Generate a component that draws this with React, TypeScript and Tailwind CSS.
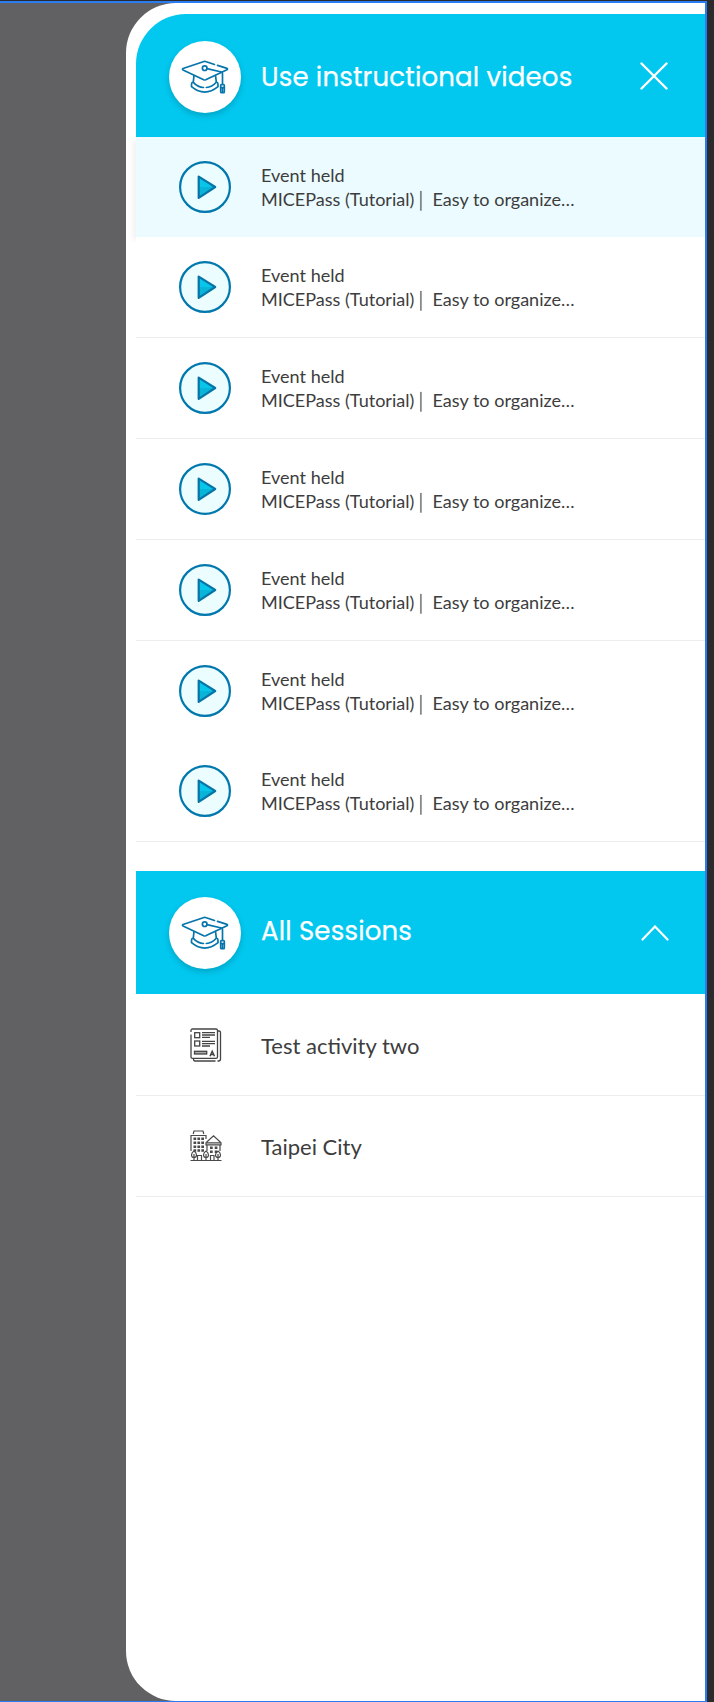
import React from "react";

function CapBadge() {
  return (
    <div className="flex h-[72px] w-[72px] shrink-0 items-center justify-center rounded-full bg-white shadow-[0_3px_6px_rgba(0,0,0,0.18)]">
      <svg width="72" height="72" viewBox="0 0 72 72" fill="none" stroke="#0675ab" strokeWidth="1.7" strokeLinecap="round" strokeLinejoin="round">
        <path d="M45.500 23.500 L36.500 20.500 Q35.700 20.300 35 20.500 L14 27.500 Q13 28.200 14 28.900 L34.700 38.800 Q35.700 39.200 36.700 38.800 L58 28.700 Q59 28 58 27.400 L48.500 24.400" />
        <circle cx="35.700" cy="27.200" r="2.300" />
        <path d="M38 27.600 L52.500 31 Q53.500 31.300 53.500 32.500 V43.500" />
        <path d="M25 34.500 L24.300 40.800 Q22.300 41.800 22.500 43.500 V45.700 Q35.700 56.500 49 45.700 V43.500 Q49.200 41.800 47.300 40.800 L46.500 34.500" />
        <path d="M24.300 41.300 Q29 46.300 34.500 46.500 M37.300 46.500 Q43 46.200 47.300 41.300" />
        <rect x="51.700" y="43.500" width="3.600" height="8.200" rx="0.800" />
        <path d="M51.700 46.700 H55.300 M53.500 47 V51" />
      </svg>
    </div>
  );
}

function PlayIcon() {
  return (
    <svg className="shrink-0" width="52" height="52" viewBox="0 0 52 52">
      <circle cx="26" cy="26" r="24.900" fill="#ebfdff" stroke="#0078ad" strokeWidth="2.200" />
      <path d="M19.700 15.600 L36.200 26 L19.700 36.800 Z" fill="#08b5d8" />
      <path d="M19.700 15.600 L36.200 26 H19.700 Z" fill="#08c6ea" />
      <path d="M19.700 15.600 L36.200 26 L19.700 36.800 Z" fill="none" stroke="#0675a6" strokeWidth="2.200" strokeLinejoin="round" />
    </svg>
  );
}

function DocumentIcon() {
  return (
    <svg width="32" height="34" viewBox="0 0 32 34" fill="none" stroke="#444" strokeWidth="1.300">
      <path d="M1 4 V2.500 Q1 1 2.500 1 H26 Q27.500 1 27.500 2.500 V29 Q27.500 30.300 26 30.300 H2.500 Q1 30.300 1 29 V6.500" />
      <path d="M27.500 3 H29 Q30.500 3 30.500 4.500 V31 Q30.500 33 28.500 33 H27.500 M25.500 33 H5 Q3.500 33 3.500 31 V30.500" />
      <rect x="4.700" y="4.700" width="5" height="5" />
      <rect x="4.700" y="13" width="5" height="5" />
      <path d="M12 4.700 H25 M12 7 H25 M12 9.400 H20 M12 13.300 H25 M12 15.600 H25 M12 18 H20" />
      <rect x="4.500" y="23.300" width="12.200" height="2.700" fill="#aaa" />
      <path d="M20 28.200 L22.200 23.300 L24.500 28.200 M20.700 26.500 H23.800" strokeWidth="1.500" />
    </svg>
  );
}

function CityIcon() {
  return (
    <svg width="32" height="32" viewBox="0 0 32 32" fill="none" stroke="#4a4a4a" strokeWidth="1.200">
      <path d="M3.200 4 L4 1 H13 L13.800 4 M1 21 V5.500 H16 V9 M1 5.500 H16 M.5 30.500 H31.500" />
      <path d="M3.500 8.700 H14 M3.500 12.700 H14 M3.500 16.700 H14 M3.500 20.500 H14" strokeWidth="2.600" strokeDasharray="2.700 1.200" />
      <path d="M16.500 12.200 L23.500 5.800 L30.500 12.200 M16 12.800 H31 V14.800 H16 Z M17 15 V21 M30 15 V21" />
      <path d="M20 17.700 H27.500 M20 21.700 H27.500" strokeWidth="2.500" strokeDasharray="2.700 2" />
      <path d="M4 21 C.8 23 .6 27.500 4 27.500 C7.400 27.500 7.200 23 4 21 M4 24 V30 M16 21 C12.800 23 12.600 27.500 16 27.500 C19.400 27.500 19.200 23 16 21 M16 24 V30 M28 21 C24.800 23 24.600 27.500 28 27.500 C31.400 27.500 31.200 23 28 21 M28 24 V30 M7.500 30 V25.500 H11.500 V30 M20.500 30 V25.500 H24 V30" />
    </svg>
  );
}

const heading =
  "ml-5 flex-1 whitespace-nowrap font-['Poppins','Inter',sans-serif] text-[26px] font-normal leading-8 tracking-[0.17px] text-white [-webkit-text-stroke:0.25px_white]";

const rows = [
  "h-[100px] bg-[#ecfbff] shadow-[-3px_3px_6px_rgba(0,0,0,0.06)]",
  "h-[101px] border-b border-[#ededed] bg-white",
  "h-[101px] border-b border-[#ededed] bg-white",
  "h-[101px] border-b border-[#ededed] bg-white",
  "h-[101px] border-b border-[#ededed] bg-white",
  "h-[100px]",
  "h-[101px] border-b border-[#ededed] bg-white",
];

export default function App() {
  return (
    <div className="flex h-[1702px] w-[714px] bg-[#2b2b2d] pt-px">
      <div className="flex h-[1701px] w-[707px] border-b border-r-2 border-t-2 border-[#2b7cf0] bg-[#616163] pl-[126px]">
        <main className="w-[579px] overflow-hidden rounded-l-[50px] bg-white pl-2.5 pt-[11px] font-['Lato',sans-serif] text-[#3d3d3d]">
          <header className="flex h-[123px] items-center rounded-tl-[50px] bg-[#02c8f0] pl-[33px] pr-[37px] pt-[3px]">
            <CapBadge />
            <h1 className={heading}>Use instructional videos</h1>
            <svg className="mb-[3px]" width="28" height="28" viewBox="0 0 28 28" stroke="white" strokeWidth="2.400" strokeLinecap="round">
              <path d="M1.500 1.500 L26.500 26.500 M26.500 1.500 L1.500 26.500" />
            </svg>
          </header>
          <ul>
            {rows.map((style, i) => (
              <li key={i} className={`flex items-center pl-[43px] ${style}`}>
                <PlayIcon />
                <p className="ml-[30px] whitespace-pre text-[18.06px] leading-6">
                  {"Event held\nMICEPass (Tutorial)│ Easy to organize…"}
                </p>
              </li>
            ))}
          </ul>
          <header className="mt-[29px] flex h-[123px] items-center bg-[#02c8f0] pl-[33px] pr-[36px]">
            <CapBadge />
            <h2 className={`pb-[3px] ${heading}`}>All Sessions</h2>
            <svg width="28" height="16" viewBox="0 0 28 16" fill="none" stroke="white" strokeWidth="2.200" strokeLinecap="round">
              <path d="M1.500 14.500 L14 1.500 L26.500 14.500" />
            </svg>
          </header>
          <ul className="text-[22px]">
            <li className="flex h-[102px] items-center border-b border-[#ededed] pl-[54px]">
              <DocumentIcon />
              <span className="ml-[39px] pt-px">Test activity two</span>
            </li>
            <li className="flex h-[101px] items-center border-b border-[#ededed] pl-[54px]">
              <CityIcon />
              <span className="ml-[39px]">Taipei City</span>
            </li>
          </ul>
        </main>
      </div>
    </div>
  );
}
